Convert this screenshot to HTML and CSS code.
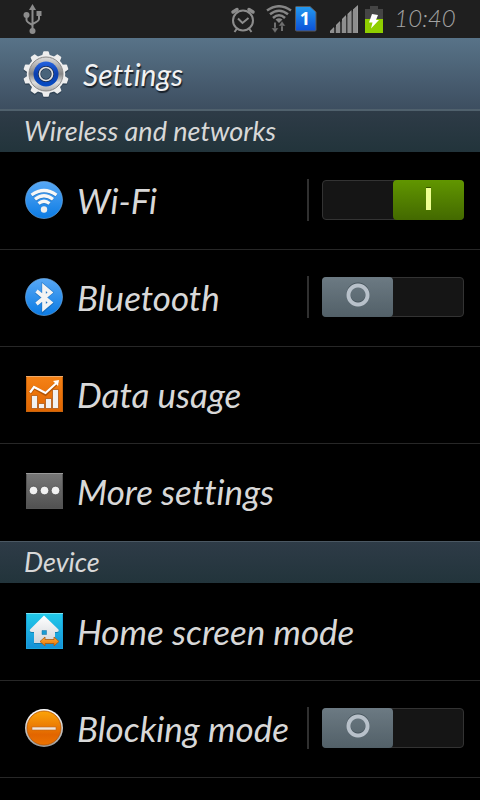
FILE: index.html
```html
<!DOCTYPE html>
<html lang="en">
<head>
<meta charset="utf-8">
<meta name="viewport" content="width=device-width, initial-scale=1">
<title>Settings</title>
<link rel="stylesheet" href="styles.css">
</head>
<body>
<div class="status">
  <svg class="status-usb" width="20" height="32" viewBox="0 0 20 32" fill="none" stroke="#8c8c8c" stroke-width="2">
    <path d="M9.500 27V5M3.500 12v5q0 2 6 5M16 11v5q0 2-6.500 5"/>
    <path d="M9.500 1l3.500 6H6z" fill="#8c8c8c" stroke="none"/>
    <circle cx="3.500" cy="12" r="3" fill="#8c8c8c" stroke="none"/>
    <rect x="13.500" y="8" width="5" height="5" fill="#8c8c8c" stroke="none"/>
    <circle cx="9.500" cy="28" r="3" fill="#8c8c8c" stroke="none"/>
  </svg>
  <svg class="status-alarm" width="26" height="28" viewBox="0 0 26 28" fill="none" stroke="#8c8c8c" stroke-width="2">
    <circle cx="13" cy="15.500" r="10"/>
    <path d="M8 13.500l4.500 4.500 6-5M7 23.500L4.500 27M19 23.500l2.500 3.500"/>
    <path d="M3 7L7 4.500M23 7L19 4.500" stroke-width="3.500" stroke-linecap="round"/>
  </svg>
  <svg class="status-wifi" width="26" height="28" viewBox="0 0 26 28" fill="none" stroke="#858585" stroke-width="2.500">
    <path d="M1 5.500q12-8.500 24 0M4 9.300q9-7 18 0M7 13q6-5.500 12 0"/>
    <path d="M13 18L9.500 14.500q3.500-2.500 7 0z" fill="#858585" stroke="none"/>
    <path d="M9 17.500v7M16 19v7" stroke="#707070" stroke-width="2"/>
    <path d="M5.500 23h7L9 28zM12.500 21h7L16 16z" fill="#707070" stroke="#1f1f1f" stroke-width=".4"/>
  </svg>
  <svg class="status-sim" width="22" height="26" viewBox="0 0 22 26">
    <defs><linearGradient id="sim" x1="0" y1="0" x2="0" y2="1"><stop offset="0" stop-color="#249aef"/><stop offset="1" stop-color="#0b51d9"/></linearGradient></defs>
    <path d="M1.500.500h13.500l6 5.500v18q0 1-1 1H1.500q-1 0-1-1v-22.500q0-1 1-1z" fill="url(#sim)" stroke="#5a5a5a"/>
    <text class="sim-number" x="10" y="19" text-anchor="middle">1</text>
  </svg>
  <svg class="status-signal" width="30" height="28" viewBox="0 0 30 28">
    <path d="M1 28v-2l4-4v6zM7 28v-8l4-4v12zM13 28V14l4-4v18zM18.500 28V9l4-4v23zM24 28V4.500L29 0v28z" fill="#999"/>
    <path d="M1 27L28 2v26H1z" fill="#777" fill-opacity=".3"/>
  </svg>
  <svg class="status-battery" width="18" height="27" viewBox="0 0 18 27">
    <path d="M5 0h8v3h5v10H0V3h5z" fill="#454545"/>
    <path d="M0 13h18v14H0z" fill="#8fce00"/>
    <path d="M7 8l6 1-2 5h3L6 22.500l1.500-6H4z" fill="#fff"/>
  </svg>
  <time class="clock">10:40</time>
</div>

<header class="title-bar">
  <svg width="48" height="48" viewBox="0 0 48 48">
    <defs>
      <linearGradient id="metal" x1="0" y1="0" x2="0" y2="1"><stop offset="0" stop-color="#dedede"/><stop offset=".5" stop-color="#858585"/><stop offset=".75" stop-color="#ddd"/><stop offset="1" stop-color="#aaa"/></linearGradient>
      <linearGradient id="blue" x1="0" y1="0" x2="0" y2="1"><stop offset="0" stop-color="#2463e0"/><stop offset=".5" stop-color="#0b3fae"/><stop offset="1" stop-color="#074cc4"/></linearGradient>
      <g id="teeth"><path id="tooth" d="M20.500 7L22 2h4l1.500 5z"/><use href="#tooth" transform="rotate(36 24 24)"/><use href="#tooth" transform="rotate(72 24 24)"/><use href="#tooth" transform="rotate(108 24 24)"/><use href="#tooth" transform="rotate(144 24 24)"/><use href="#tooth" transform="rotate(180 24 24)"/><use href="#tooth" transform="rotate(216 24 24)"/><use href="#tooth" transform="rotate(252 24 24)"/><use href="#tooth" transform="rotate(288 24 24)"/><use href="#tooth" transform="rotate(324 24 24)"/><circle cx="24" cy="24" r="18.500"/></g>
    </defs>
    <use href="#teeth" y="1.500" fill="#2b3d4d" stroke="#2b3d4d" stroke-width="1.500" stroke-linejoin="round" opacity=".7"/>
    <use href="#teeth" fill="#eee" stroke="#eee" stroke-width="1.500" stroke-linejoin="round"/>
    <circle cx="24" cy="24" r="17" fill="url(#metal)" stroke="#888"/>
    <circle cx="24" cy="24" r="12.500" fill="url(#blue)"/>
    <circle cx="24" cy="24" r="6.500" fill="#49637a" stroke="#1a2c48" stroke-width="3"/>
    <circle cx="24" cy="24" r="6.500" fill="none" stroke="#e2e2e2" stroke-width="1.700"/>
  </svg>
  <h1 class="title">Settings</h1>
</header>

<main>
  <h2 class="section">Wireless and networks</h2>
  <ul class="list">
    <li class="row">
      <a class="item" href="#wifi">
        <svg width="38" height="38" viewBox="0 0 38 38">
          <defs><linearGradient id="sky" x1="0" y1="0" x2="0" y2="1"><stop offset="0" stop-color="#58a8f5"/><stop offset="1" stop-color="#0b7be4"/></linearGradient></defs>
          <circle cx="19" cy="19" r="18.500" fill="url(#sky)" stroke="#77b4ef" stroke-opacity=".6"/>
          <path d="M6.500 14.500q12.500-9 25 0M10 18.800q9-7 18 0M13.500 23q5.500-4.500 11 0" fill="none" stroke="#1762a8" stroke-width="4" opacity=".5"/>
          <path d="M6.500 14q12.500-9 25 0M10 18.300q9-7 18 0M13.500 22.500q5.500-4.500 11 0" fill="none" stroke="#f7f7f7" stroke-width="3.300"/>
          <circle cx="19" cy="28.500" r="3.200" fill="#eee"/>
        </svg>
        <span id="wifi-label">Wi-Fi</span>
      </a>
      <span class="separator"></span>
      <input class="switch" type="checkbox" role="switch" aria-labelledby="wifi-label" checked>
    </li>
    <li class="row">
      <a class="item" href="#bluetooth">
        <svg width="38" height="38" viewBox="0 0 38 38">
          <circle cx="19" cy="19" r="18.500" fill="url(#sky)" stroke="#77b4ef" stroke-opacity=".6"/>
          <path d="M11.500 13.500L25.500 25 19 31V9L25.500 14.500 11.500 26" fill="none" stroke="#1762a8" stroke-width="4.800" opacity=".6"/>
          <path d="M11.500 13L25.500 24.500 19 30V9L25.500 14.500 11.500 26" fill="none" stroke="#f3f3f3" stroke-width="3.700"/>
        </svg>
        <span id="bluetooth-label">Bluetooth</span>
      </a>
      <span class="separator"></span>
      <input class="switch" type="checkbox" role="switch" aria-labelledby="bluetooth-label">
    </li>
    <li class="row">
      <a class="item" href="#data">
        <svg width="38" height="38" viewBox="0 0 38 38">
          <defs><linearGradient id="orange" x1="0" y1="0" x2="0" y2="1"><stop offset="0" stop-color="#f58216"/><stop offset="1" stop-color="#e06500"/></linearGradient></defs>
          <rect x="1.500" y="1.500" width="36" height="35" fill="url(#orange)" stroke="#c8640c"/>
          <path d="M1 1.500h37" stroke="#efa968"/>
          <g fill="#f1f1f1" stroke="#a84d05" stroke-opacity=".7">
            <path d="M6.500 20.500h6v13h-6zM13.500 28.500h6v5h-6zM20.500 23.500h6v10h-6zM27.500 14.500h6v19h-6z"/>
          </g>
          <path d="M5 18l4-5.500L20.500 19 33 7" fill="none" stroke="#b35506" stroke-width="3.500"/>
          <path d="M5 17.500l4-5.500L20.500 18 32 7.500" fill="none" stroke="#fff" stroke-width="2.200"/>
          <path d="M28 6l6-1-1 6z" fill="#fff"/>
        </svg>
        <span>Data usage</span>
      </a>
    </li>
    <li class="row">
      <a class="item" href="#more">
        <svg width="38" height="38" viewBox="0 0 38 38">
          <defs><linearGradient id="grey" x1="0" y1="0" x2="0" y2="1"><stop offset="0" stop-color="#777"/><stop offset="1" stop-color="#515151"/></linearGradient></defs>
          <rect x="1.500" y="1.500" width="36" height="35" fill="url(#grey)" stroke="#555"/>
          <path d="M1 1.500h37" stroke="#999"/>
          <g fill="#f2f2f2" stroke="#444" stroke-width=".7"><circle cx="8.500" cy="18.500" r="4.300"/><circle cx="19.500" cy="18.500" r="4.300"/><circle cx="30.500" cy="18.500" r="4.300"/></g>
        </svg>
        <span>More settings</span>
      </a>
    </li>
  </ul>

  <h2 class="section">Device</h2>
  <ul class="list">
    <li class="row">
      <a class="item" href="#home">
        <svg width="38" height="38" viewBox="0 0 38 38">
          <defs><linearGradient id="cyan" x1="0" y1="0" x2="0" y2="1"><stop offset="0" stop-color="#22cbea"/><stop offset="1" stop-color="#1590d7"/></linearGradient><linearGradient id="house" x1="0" y1="0" x2="0" y2="1"><stop offset="0" stop-color="#fff"/><stop offset="1" stop-color="#d2d6da"/></linearGradient><linearGradient id="arrow" x1="0" y1="0" x2="0" y2="1"><stop offset="0" stop-color="#ffad3d"/><stop offset="1" stop-color="#e87500"/></linearGradient></defs>
          <rect x="1.500" y="1.500" width="36" height="35" fill="url(#cyan)" stroke="#1aa4dc"/>
          <path d="M1 1.500h37" stroke="#77e2f4"/>
          <path d="M19 4.500L33.500 18q1 3-2 3H30v11H9V21H7q-3-.500-2-3z" fill="#0c6696" opacity=".6"/>
          <path d="M19 3.500L33.500 17.500q1 2.500-2 2.500H30v11H9V20H7q-3-.500-2-2.500z" fill="url(#house)"/>
          <path d="M17 18.500h4.500v4H17z" fill="#1a9bd2" stroke="#1773a4" stroke-width=".5"/>
          <path d="M15 29.500l5-4.500v2.500h9V25l5 4.500-5 4.500v-2.500h-9V34z" fill="url(#arrow)" stroke="#a95a12" stroke-width=".8"/>
        </svg>
        <span>Home screen mode</span>
      </a>
    </li>
    <li class="row">
      <a class="item" href="#blocking">
        <svg width="38" height="38" viewBox="0 0 38 38">
          <defs><linearGradient id="amber" x1="0" y1="0" x2="0" y2="1"><stop offset="0" stop-color="#fca409"/><stop offset=".7" stop-color="#e26500"/><stop offset="1" stop-color="#ec7300"/></linearGradient><linearGradient id="rim" x1="0" y1="0" x2="0" y2="1"><stop offset="0" stop-color="#fff"/><stop offset="1" stop-color="#999"/></linearGradient></defs>
          <circle cx="19" cy="19" r="19" fill="url(#rim)"/>
          <circle cx="19" cy="19" r="17" fill="url(#amber)" stroke="#b95600" stroke-width=".8"/>
          <rect x="7" y="18" width="24" height="3" fill="#f2e4d6" stroke="#ba651e" stroke-width=".6"/>
        </svg>
        <span id="blocking-label">Blocking mode</span>
      </a>
      <span class="separator"></span>
      <input class="switch" type="checkbox" role="switch" aria-labelledby="blocking-label">
    </li>
  </ul>
</main>
</body>
</html>
```
FILE: styles.css
```css
* {
  box-sizing: border-box;
}

body {
  margin: 0;
  background: #000;
  color: #d8d8d8;
  font-family: Lato, "Open Sans", sans-serif;
  font-style: italic;
  font-variant-ligatures: none;
}

svg {
  display: block;
  flex: none;
}

.status {
  display: flex;
  align-items: center;
  height: 38px;
  padding: 0 24px 0 23px;
  background: #1f1f1f;
}

.status-alarm {
  margin-left: auto;
}

.status-wifi {
  margin-left: 10px;
}

.status-sim {
  margin-left: 3px;
}

.sim-number {
  fill: #fff;
  font: bold 18px "Open Sans", sans-serif;
}

.status-signal {
  margin-left: 12px;
}

.status-battery {
  margin-left: 6px;
}

.clock {
  width: 62px;
  margin-left: 11px;
  color: #a3a3a3;
  font-size: 24px;
  font-weight: 300;
  line-height: 34px;
  padding-bottom: 2px;
  text-align: center;
}

.title-bar {
  display: flex;
  align-items: center;
  gap: 13px;
  height: 73px;
  padding-left: 22px;
  background: linear-gradient(#587388, #3d4e60);
  border-bottom: 2px solid #50616d;
}

.title {
  margin: 0;
  color: #f2f2f2;
  font-size: 30px;
  font-weight: 400;
  line-height: 36px;
  text-shadow: 1px 2px 1px #17202a;
}

.section {
  height: 41px;
  margin: 0 0 1px;
  padding-left: 24px;
  background: linear-gradient(#2e3b47, #22343b);
  font-size: 27px;
  font-weight: 400;
  line-height: 40px;
}

.list + .section {
  height: 42px;
  border-top: 1px solid #4b5863;
}

.list {
  margin: 0;
  padding: 0;
  list-style: none;
}

.row {
  display: flex;
  align-items: center;
  height: 97px;
  padding: 0 16px 2px 25px;
  border-bottom: 1px solid #272727;
}

.list:first-of-type .row:last-child {
  border-bottom-color: #000;
}

.item {
  display: flex;
  flex: 1;
  align-items: center;
  gap: 14px;
  color: inherit;
  font-size: 35px;
  line-height: 42px;
  text-decoration: none;
  white-space: nowrap;
}

.separator {
  width: 2px;
  height: 42px;
  margin-right: 13px;
  background: #303030;
}

.switch {
  flex: none;
  display: flex;
  width: 142px;
  height: 40px;
  margin: 0;
  appearance: none;
  background: #151515;
  border: 1px solid #333;
  border-radius: 4px;
}

.switch::before {
  content: "";
  width: 71px;
  height: 40px;
  margin: -1px;
  border-radius: 4px;
  background:
    radial-gradient(circle at 36px 18px, transparent 7px, #b8c1ca 8px, #b8c1ca 11px, transparent 12px),
    radial-gradient(circle at 36px 17px, transparent 7px, #46545c 8px, #46545c 11px, transparent 12px),
    linear-gradient(#6c7a83, #526068);
}

.switch:checked {
  justify-content: flex-end;
}

.switch:checked::before {
  background:
    linear-gradient(#355500 1px, #efff91 1px) 33px 7px / 5px 23px no-repeat,
    linear-gradient(#619600, #436900);
}
```
